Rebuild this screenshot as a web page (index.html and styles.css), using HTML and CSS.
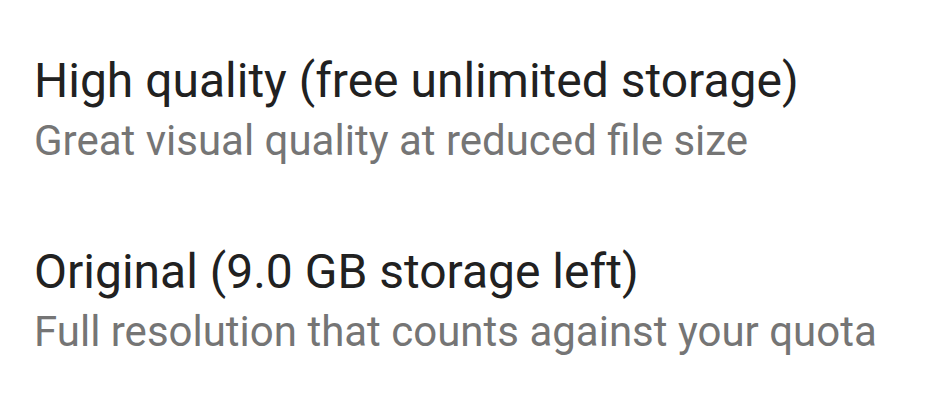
FILE: index.html
```html
<!doctype html>
<html>

<head>
	<meta charset="utf-8" />
	<link rel="stylesheet" href="styles.css">
</head>

<body>

	<div class="options">

		<div class="option">
			<div class="option-title">High quality (free unlimited storage)</div>
			<div class="option-desc">Great visual quality at reduced file size</div>
		</div>

		<div class="option">
			<div class="option-title">Original (9.0 GB storage left)</div>
			<div class="option-desc">Full resolution that counts against your quota</div>
		</div>

	</div>

</body>

</html>
```

FILE: styles.css
```css
* {
	box-sizing: border-box;
}

body {
	margin: 0;
	background: #fff;
	font-family: Roboto, 'Noto Sans', sans-serif;
}

.options {
	display: flex;
	flex-direction: column;
	gap: 71px;
	padding: 49px 0 0 34px;
}

.option-title {
	font-size: 48px;
	line-height: 64px;
	color: #212121;
}

.option-desc {
	font-size: 42px;
	line-height: 56px;
	color: #757575;
}
```
